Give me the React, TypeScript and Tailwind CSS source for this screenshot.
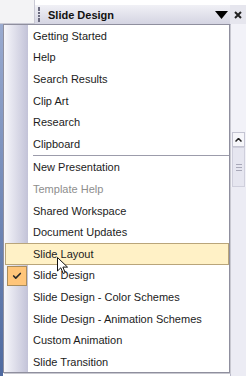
import { Check } from "lucide-react";

type Item = { label: string; disabled?: boolean; hover?: boolean; checked?: boolean };

const GROUP_ONE: Item[] = [
  { label: "Getting Started" },
  { label: "Help" },
  { label: "Search Results" },
  { label: "Clip Art" },
  { label: "Research" },
  { label: "Clipboard" },
];

const GROUP_TWO: Item[] = [
  { label: "New Presentation" },
  { label: "Template Help", disabled: true },
  { label: "Shared Workspace" },
  { label: "Document Updates" },
  { label: "Slide Layout", hover: true },
  { label: "Slide Design", checked: true },
  { label: "Slide Design - Color Schemes" },
  { label: "Slide Design - Animation Schemes" },
  { label: "Custom Animation" },
  { label: "Slide Transition" },
];

function MenuRow({ item }: { item: Item }) {
  return (
    <div className="relative flex h-[21.6px] items-center">
      {item.hover && (
        <div className="absolute inset-y-0 left-[1px] right-0 border border-[#b9a57a] bg-[#fff1c6]" />
      )}
      {item.checked && (
        <div className="absolute left-[3px] top-[1px] flex h-[20px] w-[20px] items-center justify-center border border-[#a98c5c] bg-[#ffc57a]">
          <Check size={10} strokeWidth={4} className="text-[#2a2a2a]" />
        </div>
      )}
      <span
        className={
          "relative pl-[29px] pt-[1px] text-[11px] leading-none " +
          (item.disabled ? "text-[#8e8e8e]" : "text-[#1c1c1c]")
        }
      >
        {item.label}
      </span>
    </div>
  );
}

export default function App() {
  return (
    <div
      className="relative h-[376px] w-[246px] overflow-hidden bg-white"
      style={{ fontFamily: '"Liberation Sans", Arial, sans-serif' }}
    >
      {/* title row */}
      <div className="flex h-[24px]">
        <div className="w-[35px] border-b border-r border-[#c9c9d4] bg-[#f3f3f5]" />
        <div className="flex flex-1 flex-col">
          <div className="h-[5px] bg-white" />
          <div className="flex flex-1 items-center bg-gradient-to-b from-[#f1f1f6] to-[#d4d4e2]">
            <div className="ml-[3px] flex h-[16px] w-[3px] flex-col justify-between">
              {Array.from({ length: 6 }).map((_, i) => (
                <div key={i} className="h-[2px] w-[2px] bg-[#6c6c80]" />
              ))}
            </div>
            <span className="ml-[7px] pt-[2px] text-[11px] font-bold text-[#111]">Slide Design</span>
            <div className="flex-1" />
            <svg width="13" height="8" viewBox="0 0 13 8" className="mr-[2px] mt-[1px]">
              <path d="M0 0 H13 L6.5 8 Z" fill="#000" />
            </svg>
            <div className="flex h-full w-[16px] items-center justify-center bg-[#e6e6ee]">
              <svg width="8" height="8" viewBox="0 0 8 8">
                <path d="M1 1 L7 7 M7 1 L1 7" stroke="#222" strokeWidth="2" />
              </svg>
            </div>
          </div>
        </div>
      </div>

      {/* body behind menu */}
      <div className="flex h-[352px]">
        <div className="w-[3px] bg-gradient-to-b from-[#9aabd0] to-[#4f6aa0]" />
        <div className="flex-1 bg-white" />
        <div className="flex w-[16px] flex-col border-l border-[#b8b8c8] bg-[#f2f2f8]">
          <div className="h-[108px]" />
          <div className="mx-[1px] flex h-[15px] items-center justify-center border border-[#c4c4d2] bg-[#f6f6fa]">
            <svg width="7" height="4" viewBox="0 0 7 4">
              <path d="M0.5 3.5 L3.5 0.5 L6.5 3.5" stroke="#222" strokeWidth="1.5" fill="none" />
            </svg>
          </div>
          <div className="mx-[1px] flex h-[40px] flex-col items-center justify-center gap-[2px] border border-[#cfcfdc] bg-[#e6e6f0]">
            <div className="h-px w-[6px] bg-[#a8a8b8]" />
            <div className="h-px w-[6px] bg-[#a8a8b8]" />
            <div className="h-px w-[6px] bg-[#a8a8b8]" />
          </div>
          <div className="flex-1 bg-[#ececf4]" />
        </div>
      </div>

      {/* dropdown menu */}
      <div className="absolute left-[3px] top-[24px] h-[349px] w-[227px] border border-[#8f8f9e] bg-white shadow-[1px_1px_0_#c8c8d0]">
        <div className="absolute inset-y-0 left-0 w-[24px] bg-gradient-to-r from-[#f7f7fb] to-[#c3c3d8]" />
        <div className="relative flex flex-col">
          {GROUP_ONE.map((item) => (
            <MenuRow key={item.label} item={item} />
          ))}
          <div className="flex h-[2px] items-center pl-[29px]">
            <div className="h-px flex-1 bg-[#9c9cab]" />
          </div>
          {GROUP_TWO.map((item) => (
            <MenuRow key={item.label} item={item} />
          ))}
        </div>
      </div>

      {/* mouse pointer */}
      <svg width="12" height="18" viewBox="0 0 12 18" className="absolute left-[57px] top-[257px]">
        <path d="M0.5 0.5 V14 L3.8 10.8 L6.2 16.5 L8.2 15.6 L5.9 10.1 H10.5 Z" fill="#fff" stroke="#111" strokeWidth="1" />
      </svg>
    </div>
  );
}
